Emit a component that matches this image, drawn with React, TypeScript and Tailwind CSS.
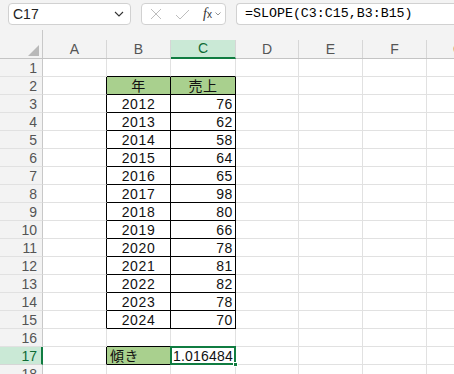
import React from "react";

const cols = [
  { key: "A", w: "w-[64px]" },
  { key: "B", w: "w-[64px]" },
  { key: "C", w: "w-[65px]" },
  { key: "D", w: "w-[63px]" },
  { key: "E", w: "w-[64px]" },
  { key: "F", w: "w-[64px]" },
  { key: "G", w: "w-[64px]" },
];

const data: [string, string][] = [
  ["2012", "76"],
  ["2013", "62"],
  ["2014", "58"],
  ["2015", "64"],
  ["2016", "65"],
  ["2017", "98"],
  ["2018", "80"],
  ["2019", "66"],
  ["2020", "78"],
  ["2021", "81"],
  ["2022", "82"],
  ["2023", "78"],
  ["2024", "70"],
];

const cellFont = "font-['Liberation_Sans','Noto_Sans_CJK_JP',sans-serif] text-[14px] text-[#111] tracking-[0.6px]";

function Cell({ row, col }: { row: number; col: string }) {
  const isB = col === "B";
  const isC = col === "C";
  const inTable = row >= 2 && row <= 15 && (isB || isC);
  const leftOfTable = col === "A" && ((row >= 2 && row <= 15) || row === 17);
  const aboveTable = row === 1 && (isB || isC);
  const aboveLabel = row === 16 && isB;
  const w = cols.find((c) => c.key === col)!.w;

  let border = "border-r border-b border-r-[#e1e1e1] border-b-[#e1e1e1]";
  if (inTable) border = "border-r border-b border-black";
  if (leftOfTable) border = "border-r border-b border-r-black border-b-[#e1e1e1]";
  if (aboveTable || aboveLabel) border = "border-r border-b border-r-[#e1e1e1] border-b-black";
  if (row === 17 && isB) border = "border-r border-b border-black";

  let content: React.ReactNode = null;
  let align = "justify-end pr-[2px]";
  let bg = "";
  if (inTable && row === 2) {
    bg = "bg-[#a9d08e]";
    align = "justify-center";
    content = isB ? "年" : "売上";
  } else if (inTable) {
    const d = data[row - 3];
    if (isB) {
      align = "justify-center";
      content = d[0];
    } else {
      content = d[1];
    }
  } else if (row === 17 && isB) {
    bg = "bg-[#a9d08e]";
    align = "justify-start pl-[3px]";
    content = "傾き";
  }

  if (row === 17 && isC) {
    return (
      <div className={`${w} h-[18px] shrink-0 relative border-r border-b border-r-[#e1e1e1] border-b-[#e1e1e1]`}>
        <div className="absolute left-[-1px] top-[-1px] right-[-1px] bottom-[-1px] border-2 border-[#107c41] flex items-center justify-end pr-[1px]">
          <span className="font-['Liberation_Sans',sans-serif] text-[14px] text-[#111] tracking-[0.2px] leading-none whitespace-nowrap">1.016484</span>
        </div>
        <div className="absolute right-[-3px] bottom-[-3px] w-[5px] h-[5px] bg-[#107c41] border border-white" />
      </div>
    );
  }

  return (
    <div className={`${w} h-[18px] shrink-0 flex items-center ${align} ${border} ${bg}`}>
      {content && <span className={`${cellFont} leading-none`}>{content}</span>}
    </div>
  );
}

export default function App() {
  const rows = Array.from({ length: 18 }, (_, i) => i + 1);
  return (
    <div className="w-[454px] h-[374px] overflow-hidden bg-white font-['Liberation_Sans',sans-serif]">
      {/* toolbar */}
      <div className="h-[40px] bg-[#f3f3f3] relative">
        <div className="flex items-start gap-[10px] pt-[3px] pl-[8px]">
          <div className="w-[123px] h-[22px] bg-white border border-[#d1d1d1] rounded-[4px] flex items-center justify-between pl-[4px] pr-[6px]">
            <span className="text-[14px] text-[#222]">C17</span>
            <svg width="10" height="6" viewBox="0 0 10 6">
              <path d="M1 1 L5 5 L9 1" fill="none" stroke="#333" strokeWidth="1.1" />
            </svg>
          </div>
          <div className="w-[85px] h-[22px] bg-white border border-[#d1d1d1] rounded-[4px] flex items-center pl-[8px] gap-[13px]">
            <svg width="12" height="12" viewBox="0 0 12 12">
              <path d="M1 1 L11 11 M11 1 L1 11" stroke="#bdbdbd" strokeWidth="1" fill="none" />
            </svg>
            <svg width="15" height="11" viewBox="0 0 15 11">
              <path d="M1 6 L5 10 L14 1" stroke="#bdbdbd" strokeWidth="1" fill="none" />
            </svg>
            <div className="flex items-center gap-[3px]">
              <span className="font-['Liberation_Serif',serif] italic text-[14px] text-[#333] leading-none">
                f<span className="text-[10px] not-italic font-['Liberation_Sans',sans-serif]">x</span>
              </span>
              <svg width="6" height="4" viewBox="0 0 6 4">
                <path d="M0.5 0.5 L3 3 L5.5 0.5" fill="none" stroke="#888" strokeWidth="0.9" />
              </svg>
            </div>
          </div>
          <div className="flex-1 h-[22px] bg-white border border-r-0 border-[#d1d1d1] rounded-l-[4px] flex items-center pl-[8px]">
            <span className="font-['Liberation_Mono',monospace] text-[13.3px] text-black">=SLOPE(C3:C15,B3:B15)</span>
          </div>
        </div>
        <div className="absolute left-0 bottom-0 w-[43px] h-[10px] border-r border-[#c8c8c8]" />
      </div>

      {/* column header */}
      <div className="flex h-[19px] bg-[#f3f3f3] border-b border-[#c4c4c4]">
        <div className="w-[43px] shrink-0 border-r border-[#c8c8c8] relative">
          <svg className="absolute right-[3px] bottom-[2px]" width="11" height="11" viewBox="0 0 11 11">
            <path d="M11 0 L11 11 L0 11 Z" fill="#b9b9b9" />
          </svg>
        </div>
        {cols.map((c) =>
          c.key === "C" ? (
            <div key={c.key} className={`${c.w} shrink-0 flex items-center justify-center bg-[#cae9d6] border-r border-[#d6d6d6] border-b-2 border-b-[#107c41] mb-[-1px]`}>
              <span className="text-[14px] text-[#0e6b35]">{c.key}</span>
            </div>
          ) : (
            <div key={c.key} className={`${c.w} shrink-0 flex items-center justify-center border-r border-[#d6d6d6]`}>
              <span className="text-[14px] text-[#555]">{c.key}</span>
            </div>
          )
        )}
      </div>

      {/* rows */}
      {rows.map((r) => (
        <div key={r} className="flex">
          {r === 17 ? (
            <div className="w-[43px] h-[18px] shrink-0 bg-[#cae9d6] border-r-2 border-r-[#107c41] border-b border-b-[#d6d6d6] flex items-center justify-end pr-[4px]">
              <span className="text-[14px] text-[#0e6b35] leading-none">{r}</span>
            </div>
          ) : (
            <div className="w-[43px] h-[18px] shrink-0 bg-[#f3f3f3] border-r border-r-[#c8c8c8] border-b border-b-[#e1e1e1] flex items-center justify-end pr-[5px]">
              <span className="text-[14px] text-[#555] leading-none">{r}</span>
            </div>
          )}
          {cols.map((c) => (
            <Cell key={c.key} row={r} col={c.key} />
          ))}
        </div>
      ))}
    </div>
  );
}
